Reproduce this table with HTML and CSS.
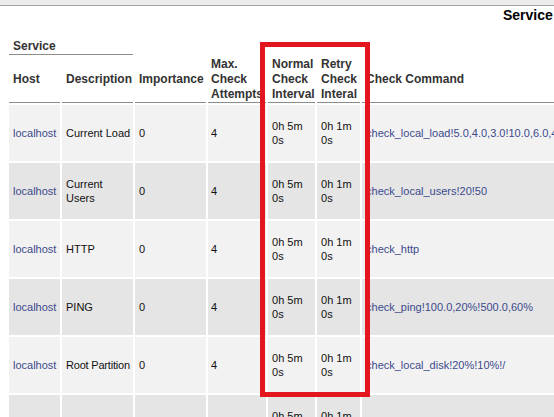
FILE: index.html
```html
<!DOCTYPE html>
<html>
<head>
<meta charset="utf-8">
<link rel="stylesheet" href="styles.css">
</head>
<body>
<div class="topbar"></div>
<div class="title">Service</div>
<div class="content">
<table class="svc">
  <colgroup>
    <col class="c-host"><col class="c-desc"><col class="c-imp"><col class="c-max"><col class="c-norm"><col class="c-retry"><col class="c-cmd">
  </colgroup>
  <thead>
    <tr class="group">
      <th colspan="2" class="grp">Service</th>
      <th class="blank"></th><th class="blank"></th><th class="blank"></th><th class="blank"></th><th class="blank"></th>
    </tr>
    <tr class="heads">
      <th>Host</th>
      <th>Description</th>
      <th>Importance</th>
      <th class="narrow">Max.<br>Check<br>Attempts</th>
      <th>Normal<br>Check<br>Interval</th>
      <th>Retry<br>Check<br>Interal</th>
      <th>Check Command</th>
    </tr>
  </thead>
  <tbody>
    <tr class="odd">
      <td><a href="#">localhost</a></td><td>Current Load</td><td>0</td><td class="narrow">4</td><td>0h 5m<br>0s</td><td>0h 1m<br>0s</td><td><a href="#">check_local_load!5.0,4.0,3.0!10.0,6.0,4.0</a></td>
    </tr>
    <tr class="even">
      <td><a href="#">localhost</a></td><td>Current<br>Users</td><td>0</td><td class="narrow">4</td><td>0h 5m<br>0s</td><td>0h 1m<br>0s</td><td><a href="#">check_local_users!20!50</a></td>
    </tr>
    <tr class="odd">
      <td><a href="#">localhost</a></td><td>HTTP</td><td>0</td><td class="narrow">4</td><td>0h 5m<br>0s</td><td>0h 1m<br>0s</td><td><a href="#">check_http</a></td>
    </tr>
    <tr class="even">
      <td><a href="#">localhost</a></td><td>PING</td><td>0</td><td class="narrow">4</td><td>0h 5m<br>0s</td><td>0h 1m<br>0s</td><td><a href="#">check_ping!100.0,20%!500.0,60%</a></td>
    </tr>
    <tr class="odd">
      <td><a href="#">localhost</a></td><td class="tight">Root Partition</td><td>0</td><td class="narrow">4</td><td>0h 5m<br>0s</td><td>0h 1m<br>0s</td><td><a href="#">check_local_disk!20%!10%!/</a></td>
    </tr>
    <tr class="even">
      <td><a href="#">localhost</a></td><td>SSH</td><td>0</td><td class="narrow">4</td><td>0h 5m<br>0s</td><td>0h 1m<br>0s</td><td><a href="#">check_ssh</a></td>
    </tr>
  </tbody>
</table>
</div>
<div class="highlight"></div>
</body>
</html>
```
FILE: styles.css
```css
html {
  overflow: hidden;
}
body {
  margin: 0;
  background: #ffffff;
  font-family: "Liberation Sans", Arial, sans-serif;
  color: #111111;
  position: relative;
  width: 920px;
}
.topbar {
  height: 5px;
  background: #ececec;
  border-bottom: 1px solid #a3a3a3;
}
.title {
  font-size: 14px;
  font-weight: bold;
  line-height: 16px;
  margin-top: 1px;
  padding-left: 503px;
  white-space: nowrap;
  color: #000;
}
.content {
  padding-top: 14px;
  padding-left: 7px;
}
.svc {
  border-collapse: separate;
  border-spacing: 2px;
  table-layout: fixed;
  width: 897px;
}
.c-host { width: 51px; }
.c-desc { width: 71px; }
.c-imp { width: 71px; }
.c-max { width: 58px; }
.c-norm { width: 47px; }
.c-retry { width: 43px; }
.c-cmd { width: 540px; }

.svc th {
  font-size: 12px;
  font-weight: bold;
  color: #333333;
  text-align: left;
  padding: 0 4px;
  line-height: 15px;
  white-space: nowrap;
}
.group th {
  vertical-align: bottom;
}
.group th.grp {
  border-bottom: 1px solid #8c8c8c;
}
.heads th {
  vertical-align: middle;
  padding-bottom: 0;
  border-bottom: 1px solid #8c8c8c;
}
.svc td {
  font-size: 11px;
  line-height: 14px;
  height: 56px;
  box-sizing: border-box;
  padding: 0 4px;
  vertical-align: middle;
  white-space: nowrap;
}
.svc td.tight {
  letter-spacing: -0.2px;
  padding-right: 0;
}
.svc .narrow {
  padding-left: 3px;
}
.odd td { background: #f3f2f2; }
.even td { background: #e5e5e5; }
.svc a {
  color: #3b4a8c;
  text-decoration: none;
}
.highlight {
  position: absolute;
  left: 260px;
  top: 42px;
  width: 100px;
  height: 345px;
  border: 5px solid #e3161f;
}
```
